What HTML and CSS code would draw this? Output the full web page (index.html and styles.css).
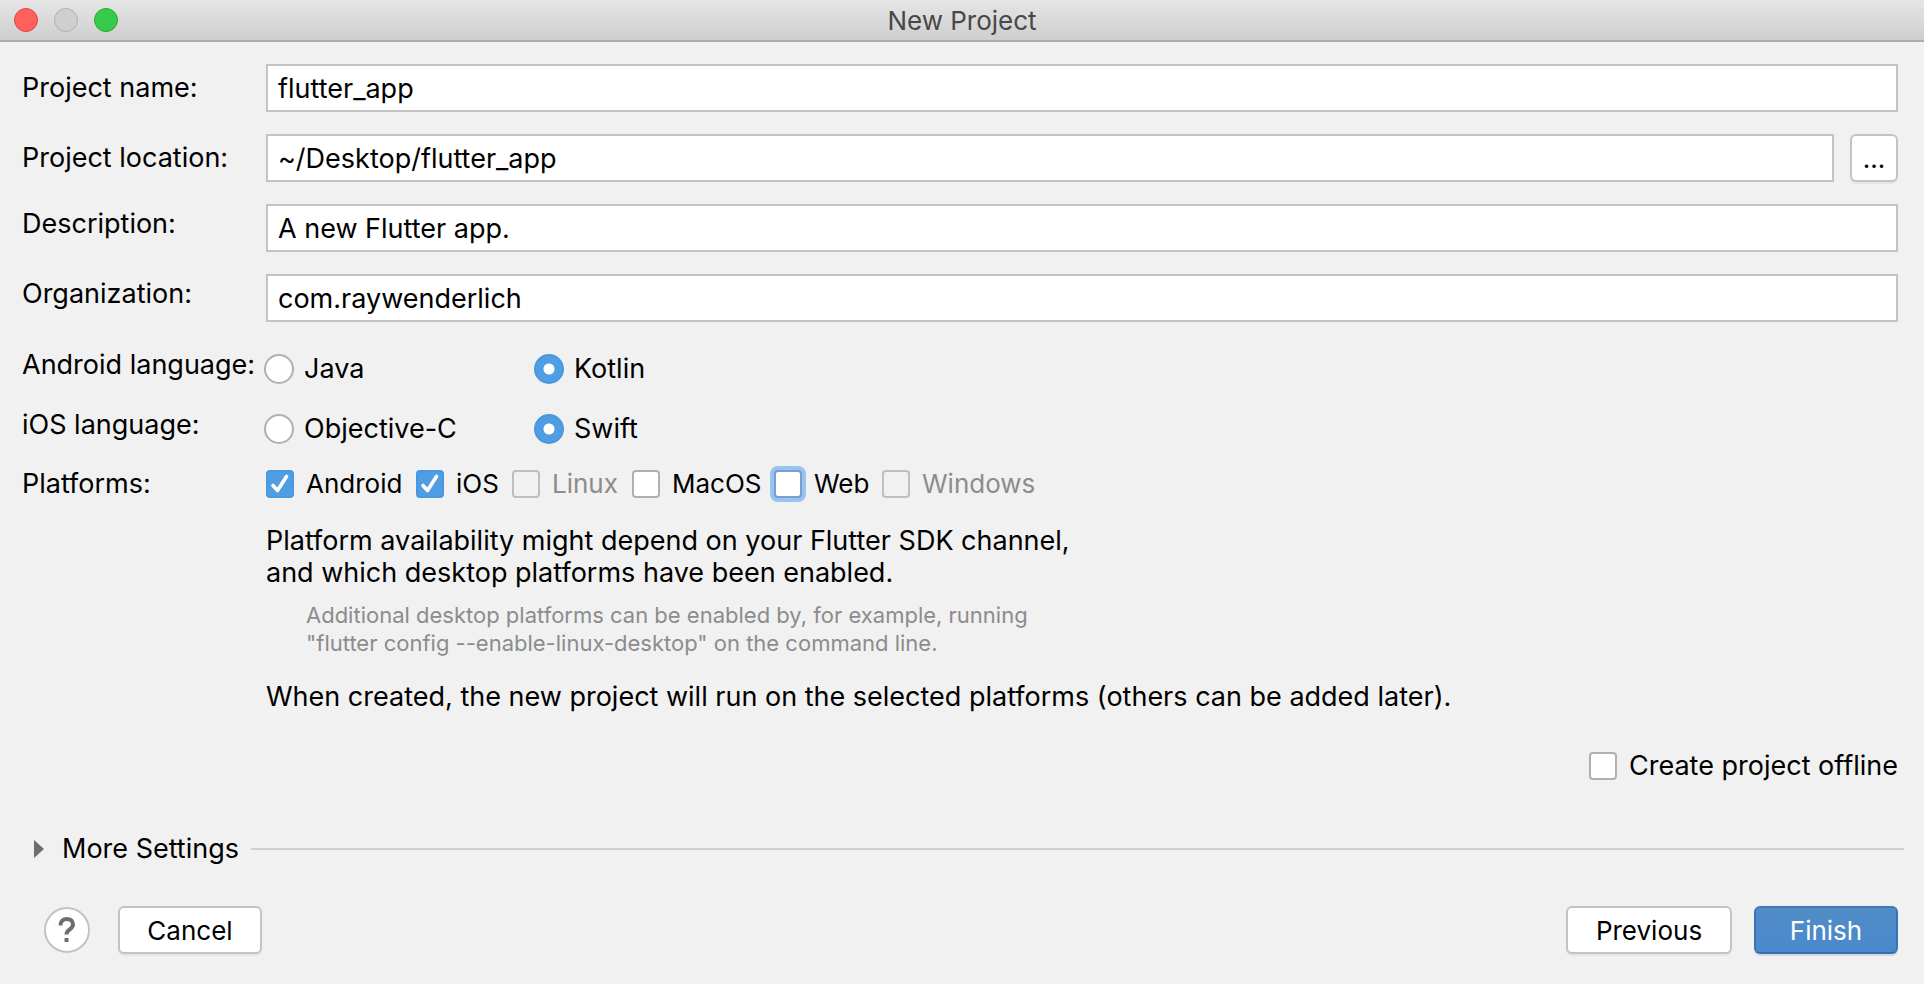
FILE: index.html
```html
<!DOCTYPE html>
<html lang="en">
<head>
<meta charset="utf-8">
<title>New Project</title>
<link rel="stylesheet" href="styles.css">
</head>
<body>
<header class="titlebar">
  <div class="lights">
    <button class="light light-close" type="button" aria-label="Close"></button>
    <button class="light light-minimize" type="button" aria-label="Minimize" disabled></button>
    <button class="light light-zoom" type="button" aria-label="Zoom"></button>
  </div>
  <h1 class="title">New Project</h1>
</header>
<form class="dialog">
  <div class="fields">
    <label class="label" for="name">Project name:</label>
    <input class="text" id="name" type="text" value="flutter_app" spellcheck="false">
    <label class="label" for="location">Project location:</label>
    <div class="with-button">
      <input class="text" id="location" type="text" value="~/Desktop/flutter_app" spellcheck="false">
      <button class="button browse" type="button" aria-label="Browse">...</button>
    </div>
    <label class="label raised" for="description">Description:</label>
    <input class="text" id="description" type="text" value="A new Flutter app." spellcheck="false">
    <label class="label raised" for="organization">Organization:</label>
    <input class="text" id="organization" type="text" value="com.raywenderlich" spellcheck="false">
  </div>

  <div class="options">
    <span class="label raised" id="android-label">Android language:</span>
    <div class="radios" role="radiogroup" aria-labelledby="android-label">
      <label class="choice"><input class="radio" type="radio" name="android">Java</label>
      <label class="choice"><input class="radio" type="radio" name="android" checked>Kotlin</label>
    </div>
    <span class="label raised" id="ios-label">iOS language:</span>
    <div class="radios" role="radiogroup" aria-labelledby="ios-label">
      <label class="choice"><input class="radio" type="radio" name="ios">Objective-C</label>
      <label class="choice"><input class="radio" type="radio" name="ios" checked>Swift</label>
    </div>
    <span class="label" id="platforms-label">Platforms:</span>
    <div class="checks" role="group" aria-labelledby="platforms-label">
      <label class="choice check-choice"><span class="box"><input class="check" type="checkbox" checked><svg class="tick" viewBox="0 0 28 28"><path d="M7 15.500L11.500 20.500L20.500 6.500"/></svg></span>Android</label>
      <label class="choice check-choice"><span class="box"><input class="check" type="checkbox" checked><svg class="tick" viewBox="0 0 28 28"><path d="M7 15.500L11.500 20.500L20.500 6.500"/></svg></span>iOS</label>
      <label class="choice check-choice off"><span class="box"><input class="check" type="checkbox" disabled></span>Linux</label>
      <label class="choice check-choice"><span class="box"><input class="check" type="checkbox"></span>MacOS</label>
      <label class="choice check-choice"><span class="box"><input class="check focused" type="checkbox"></span>Web</label>
      <label class="choice check-choice off"><span class="box"><input class="check" type="checkbox" disabled></span>Windows</label>
    </div>
  </div>

  <div class="notes">
    <p class="note">Platform availability might depend on your Flutter SDK channel,<br>and which desktop platforms have been enabled.</p>
    <p class="hint">Additional desktop platforms can be enabled by, for example, running<br>"flutter config --enable-linux-desktop" on the command line.</p>
    <p class="note">When created, the new project will run on the selected platforms (others can be added later).</p>
  </div>

  <div class="offline">
    <label class="choice check-choice"><span class="box"><input class="check" type="checkbox"></span>Create project offline</label>
  </div>

  <div class="more">
    <button class="more-toggle" type="button" aria-expanded="false"><svg class="arrow" viewBox="0 0 10 18"><path d="M0 0L10 9L0 18Z"/></svg>More Settings</button>
    <hr class="rule">
  </div>

  <footer class="footer">
    <button class="help" type="button" aria-label="Help"><svg class="help-icon" viewBox="0 0 18 26"><path d="M2.500 8.500C2.500 4.500 5 2 8.800 2C12.800 2 15 4.300 15 7.500C15 12.500 8.500 12.300 8.500 17.500"/><rect x="6.500" y="21" width="4" height="4"/></svg></button>
    <button class="button cancel" type="button">Cancel</button>
    <button class="button previous" type="button">Previous</button>
    <button class="button finish" type="submit">Finish</button>
  </footer>
</form>
</body>
</html>
```
FILE: styles.css
```css
* {
  box-sizing: border-box;
}

body {
  margin: 0;
  background: #f1f1f1;
  color: #000;
  font: 27px/32px Inter, "Liberation Sans", sans-serif;
}

button,
input {
  margin: 0;
  font: inherit;
  color: inherit;
}

p,
h1 {
  margin: 0;
}

.titlebar {
  display: grid;
  grid-template-columns: 1fr auto 1fr;
  align-items: center;
  height: 42px;
  padding: 0 14px;
  background: linear-gradient(#e6e6e6, #cecece);
  border-bottom: 2px solid #acacac;
}

.lights {
  display: flex;
  gap: 16px;
}

.light {
  width: 24px;
  height: 24px;
  padding: 0;
  border: 1px solid;
  border-radius: 50%;
}

.light-close {
  background: #fe605b;
  border-color: #e2463f;
}

.light-minimize {
  background: #cfcfcf;
  border-color: #b0b0b0;
}

.light-zoom {
  background: #36cb4a;
  border-color: #25ab35;
}

.title {
  padding-top: 2px;
  font-size: 26px;
  font-weight: 400;
  color: #484848;
}

.dialog {
  padding: 22px 26px 30px 22px;
}

.fields,
.options {
  display: grid;
  grid-template-columns: 244px 1fr;
  align-items: center;
}

.fields {
  row-gap: 22px;
}

.label {
  white-space: nowrap;
}

.raised {
  padding-bottom: 8px;
}

.text {
  width: 100%;
  height: 48px;
  padding: 0 10px;
  background: #fff;
  border: 2px solid #c3c3c3;
  border-radius: 0;
  outline: none;
}

.with-button {
  display: flex;
  gap: 16px;
}

.button {
  height: 48px;
  padding: 2px 10px 0;
  font-size: 26px;
  background: #fff;
  border: 2px solid #c3c3c3;
  border-radius: 6px;
  box-shadow: 0 2px 0 #e6e6e6;
}

.browse {
  flex: none;
  width: 48px;
}

.options {
  grid-template-rows: 60px 60px 50px;
  margin-top: 17px;
}

.radios {
  display: grid;
  grid-template-columns: 270px auto;
  justify-content: start;
  margin-left: -2px;
}

.choice {
  display: flex;
  align-items: center;
  gap: 10px;
  white-space: nowrap;
}

.check-choice {
  gap: 12px;
}

.radio {
  appearance: none;
  flex: none;
  width: 30px;
  height: 30px;
  background: #fff;
  border: 2px solid #b0b0b0;
  border-radius: 50%;
}

.radio:checked {
  background: radial-gradient(circle, #fff 5px, #4f9ee3 6px);
  border-color: #4b97dc;
}

.checks {
  display: grid;
  grid-template-columns: 150px 96px 120px 142px 108px auto;
  justify-content: start;
  font-size: 26px;
}

.box {
  display: grid;
  flex: none;
}

.check,
.tick {
  grid-area: 1 / 1;
  width: 28px;
  height: 28px;
}

.check {
  appearance: none;
  background: #fff;
  border: 2px solid #b0b0b0;
  border-radius: 4px;
}

.check:checked {
  background: #4f9ee3;
  border-color: #4b97dc;
}

.check:disabled {
  background: #f1f1f1;
  border-color: #bfbfbf;
}

.focused {
  border-color: #7b9fc7;
  box-shadow: 0 0 0 4px #97c3f3;
}

.off {
  color: #8c8c8c;
}

.tick {
  fill: none;
  stroke: #fff;
  stroke-width: 3.6;
  stroke-linecap: round;
  stroke-linejoin: round;
  pointer-events: none;
}

.notes {
  margin: 16px 0 0 244px;
}

.hint {
  margin: 12px 0 24px 40px;
  font-size: 22px;
  line-height: 28px;
  color: #8c8c8c;
}

.offline {
  display: flex;
  justify-content: flex-end;
  margin-top: 37px;
}

.more {
  display: flex;
  align-items: center;
  gap: 12px;
  margin: 51px -6px 0 12px;
}

.more-toggle {
  display: flex;
  align-items: center;
  gap: 18px;
  padding: 0;
  background: none;
  border: 0;
}

.arrow {
  width: 10px;
  height: 18px;
  fill: #6e6e6e;
}

.rule {
  flex: 1;
  height: 2px;
  margin: 0;
  background: #d0d0d0;
  border: 0;
}

.footer {
  display: flex;
  align-items: center;
  margin: 41px 0 0 22px;
}

.help {
  display: grid;
  place-items: center;
  width: 46px;
  height: 46px;
  padding: 0;
  background: #fff;
  border: 2px solid #c3c3c3;
  border-radius: 50%;
}

.help-icon {
  width: 18px;
  height: 26px;
  fill: #6e6e6e;
}

.help-icon path {
  fill: none;
  stroke: #6e6e6e;
  stroke-width: 4;
}

.cancel {
  width: 144px;
  margin-left: 28px;
}

.previous {
  width: 166px;
  margin-left: auto;
}

.finish {
  width: 144px;
  margin-left: 22px;
  color: #fff;
  background: linear-gradient(#528cc7, #4989cc);
  border-color: #4079b8 #3a74b5 #346eb0;
  box-shadow: 0 2px 0 #d9d9d9;
}
```
